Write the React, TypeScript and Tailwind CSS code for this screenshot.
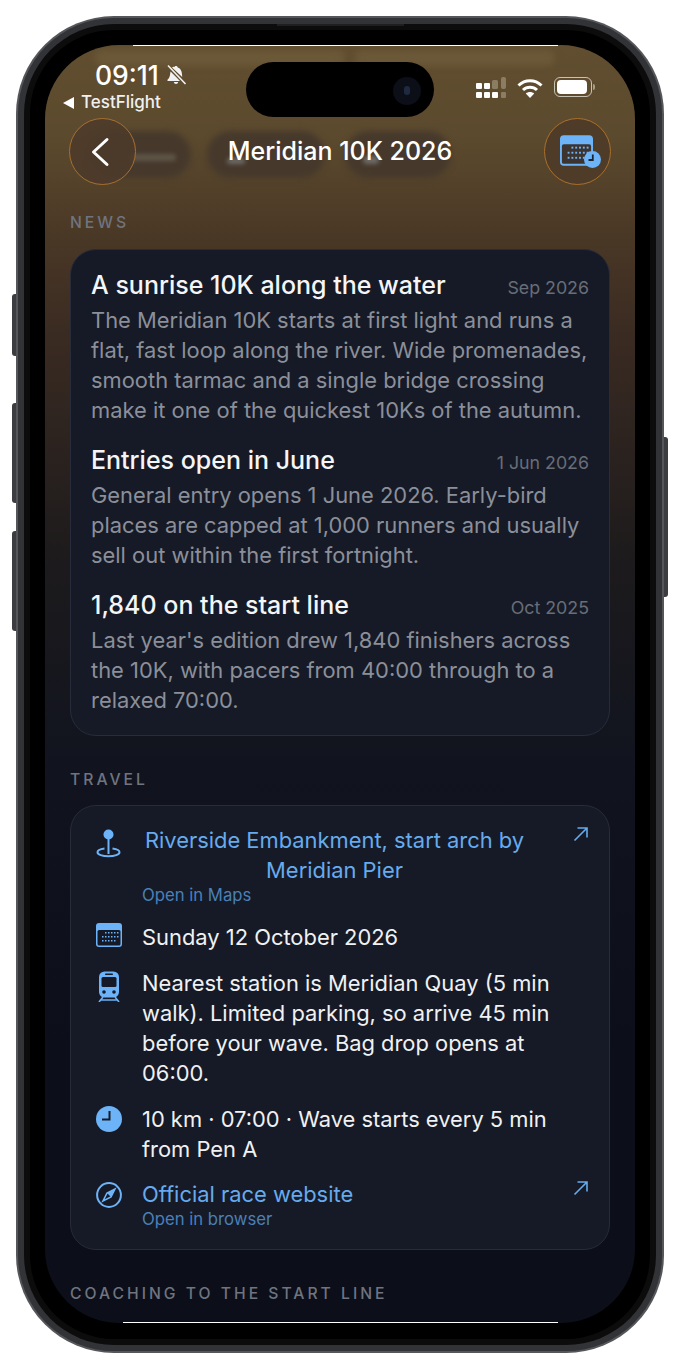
import React from "react";

const inter = { fontFamily: "Inter, 'Noto Sans', sans-serif" };

function Label({ children }: { children: React.ReactNode }) {
  return (
    <div className="pl-[25px] text-[15.7px] leading-[20px] font-medium tracking-[3px] text-[#6f7480]">{children}</div>
  );
}

function NewsItem({ title, date, body }: { title: string; date: string; body: string[] }) {
  return (
    <div>
      <div className="flex items-baseline justify-between">
        <div className="text-[25px] leading-[40px] font-medium text-[#f4f5f7]">{title}</div>
        <div className="text-[17.8px] text-[#686d78]">{date}</div>
      </div>
      <div className="text-[21.9px] leading-[30px] text-[#8b8f9a]">
        {body.map((l) => (
          <div key={l} className="whitespace-nowrap">{l}</div>
        ))}
      </div>
    </div>
  );
}

const Arrow = () => (
  <svg width="16" height="16" viewBox="0 0 16 16" fill="none" stroke="#66abee" strokeWidth="1.6" className="shrink-0">
    <path d="M1.5 14.5 14 2M4.5 2H14V11.5" />
  </svg>
);

const CalendarIcon = ({ w, h, inner }: { w: number; h: number; inner: string }) => (
  <svg width={w} height={h} viewBox="0 0 26 24" className="shrink-0">
    <rect x="0" y="0" width="26" height="24" rx="3" fill="#6db3f8" />
    <rect x="1.5" y="7" width="23" height="15.500" rx="1.500" fill={inner} />
    <g fill="#6db3f8">
      {[0, 1, 2, 3, 4].map((i) => <rect key={"a" + i} x={9 + i * 3} y="9" width="1.500" height="1.500" />)}
      {[0, 1, 2, 3, 4, 5].map((i) => <rect key={"b" + i} x={6 + i * 3} y="13" width="1.500" height="1.500" />)}
      {[0, 1, 2, 3, 4].map((i) => <rect key={"c" + i} x={6 + i * 3} y="17" width="1.500" height="1.500" />)}
    </g>
  </svg>
);

export default function App() {
  return (
    <div className="relative w-[680px] h-[1369px] bg-white overflow-hidden" style={inter}>
      {/* side buttons */}
      <div className="absolute left-[12px] top-[294px] w-[6px] h-[62px] rounded-l-[3px] bg-[#3c3d40]" />
      <div className="absolute left-[12px] top-[403px] w-[6px] h-[100px] rounded-l-[3px] bg-[#3c3d40]" />
      <div className="absolute left-[12px] top-[531px] w-[6px] h-[100px] rounded-l-[3px] bg-[#3c3d40]" />
      <div className="absolute left-[662px] top-[437px] w-[6px] h-[160px] rounded-r-[3px] bg-[#3c3d40]" />

      <div className="absolute left-[16px] top-[16px] w-[648px] h-[1337px] rounded-[98px] bg-[#55565a] p-[2px]">
        <div className="w-full h-full rounded-[96px] bg-[#323336] p-[6px]">
          <div className="w-full h-full rounded-[90px] bg-[#0c0c0d] p-[6px]">
            <div className="w-full h-full rounded-[84px] bg-black pt-[15px] pl-[15px]">
              <div className="relative w-[590px] h-[1278px]">
                {/* screen */}
                <div className="relative w-full h-full rounded-[74px] overflow-hidden border-y border-transparent bg-origin-border bg-[linear-gradient(180deg,#614e30_0px,#5c4a2e_90px,#4a3826_190px,#3a2b22_290px,#1c1a1c_520px,#11141f_720px,#0c0f19_1000px,#0c0f19_100%)]">
                  {/* blurred content behind the status bar and header */}
                  <div className="absolute left-[50px] top-[4px] w-[250px] h-[16px] rounded-full bg-[#6b5838] blur-[3px]" />
                  <div className="absolute left-[310px] top-[4px] w-[200px] h-[16px] rounded-full bg-[#6b5838] blur-[3px]" />
                  <div className="absolute left-[42px] top-[85px] w-[104px] h-[47px] rounded-full bg-[#46392c] blur-[3px]" />
                  <div className="absolute left-[85px] top-[108px] w-[46px] h-[7px] rounded-full bg-[#5e5547] blur-[2px]" />
                  <div className="absolute left-[162px] top-[85px] w-[118px] h-[47px] rounded-full bg-[#46392c] blur-[3px]" />
                  <div className="absolute left-[182px] top-[112px] w-[18px] h-[6px] rounded-full bg-[#6e6a66] blur-[2px]" />
                  <div className="absolute left-[300px] top-[85px] w-[106px] h-[47px] rounded-full bg-[#46392c] blur-[3px]" />
                  <div className="absolute left-[318px] top-[110px] w-[16px] h-[8px] rounded-full bg-[#6e6a66] blur-[2px]" />

                  {/* island */}
                  <div className="absolute left-[201px] top-[16px] w-[188px] h-[55px] rounded-full bg-black">
                    <div className="absolute right-[13px] top-[15px] w-[28px] h-[28px] rounded-full bg-[#0c0e18]">
                      <div className="absolute left-[11px] top-[9px] w-[6px] h-[9px] rounded-full bg-[#1f2a40]" />
                    </div>
                  </div>

                  {/* status bar */}
                  <div className="relative flex h-[60px] justify-between pl-[50px] pr-[40px] pt-[14px]">
                    <div>
                      <div className="flex items-center gap-[7px] h-[30px]">
                        <span className="text-[26.500px] font-medium leading-[30px] text-white">09:11</span>
                        <svg width="21" height="22" viewBox="0 0 21 22" fill="#f2f2f2">
                          <path d="M10 2c1 0 1.600.6 1.700 1.400 2.600.7 4 3 4.200 6l.3 3.500L6 3.500C7 2.800 8 2.400 8.400 3.300 8.500 2.600 9 2 10 2ZM4.600 7.400 14 17H1.500v-1.200C3.400 14 4 12 4.200 9.500c0-.8.200-1.500.4-2.100ZM7.800 18h4.400c-.2 1.200-1.100 2-2.200 2s-2-.8-2.200-2Z" />
                          <path d="M2 1.500 19.500 20" stroke="#f2f2f2" strokeWidth="1.600" />
                        </svg>
                      </div>
                      <div className="flex items-center gap-[7px] h-[22px] -ml-[32px] mt-[2px] text-[17px] font-medium text-[#f0f0f0]">
                        <span className="w-0 h-0 border-y-[6px] border-y-transparent border-r-[11px] border-r-white" />
                        <span>TestFlight</span>
                      </div>
                    </div>
                    <div className="flex items-start gap-[11px] pt-[18px]">
                      <svg width="30" height="21" viewBox="0 0 30 21" className="-mt-[1px]">
                        <g fill="#fff">
                          <rect x="0" y="6" width="6" height="6" rx="1" /><rect x="0" y="15" width="6" height="6" rx="1" />
                          <rect x="8" y="6" width="6" height="6" rx="1" /><rect x="8" y="15" width="6" height="6" rx="1" />
                          <rect x="16" y="15" width="6" height="6" rx="1" />
                        </g>
                        <g fill="#8b7c62">
                          <rect x="16" y="3" width="6" height="9" rx="1.500" />
                          <rect x="25" y="0" width="5" height="12" rx="2" /><rect x="25" y="15" width="5" height="6" rx="1" />
                        </g>
                      </svg>
                      <svg width="26" height="20" viewBox="0 0 26 20" fill="none" stroke="#fff" strokeWidth="3">
                        <path d="M1.500 7.500C8 1 18 1 24.500 7.500M6 12c4-3.800 10-3.800 14 0" />
                        <path d="M13 20 8.800 15.500c2.400-2 6-2 8.400 0Z" fill="#fff" stroke="none" />
                      </svg>
                      <div className="flex items-center -mt-[1px]">
                        <div className="w-[38px] h-[20px] rounded-[6px] border border-[#c8c2b4] p-[2px]">
                          <div className="w-[30px] h-[14px] rounded-[4px] bg-white" />
                        </div>
                        <div className="ml-[1px] w-[2px] h-[6px] rounded-r-[2px] bg-[#a89e88]" />
                      </div>
                    </div>
                  </div>

                  {/* header */}
                  <div className="relative flex items-center justify-between h-[67px] mt-[12px] px-[24px]">
                    <div className="flex w-[67px] h-[67px] items-center justify-center rounded-full border border-[#a8702e] bg-[#4c3a2a]/85">
                      <svg width="20" height="30" viewBox="0 0 20 30" fill="none" stroke="#fff" strokeWidth="3" strokeLinecap="round" strokeLinejoin="round" className="-ml-[5px]">
                        <path d="M17 2.500 3.500 15 17 27.500" />
                      </svg>
                    </div>
                    <div className="text-[25px] font-medium text-white">Meridian 10K 2026</div>
                    <div className="relative flex w-[67px] h-[67px] items-center justify-center rounded-full border border-[#a8702e] bg-[#4e3c29]">
                      <div className="-mt-[3px] -ml-[2px]"><CalendarIcon w={33} h={31} inner="#3d3430" /></div>
                      <svg width="17" height="17" viewBox="0 0 17 17" className="absolute left-[39px] top-[32px]">
                        <circle cx="8.500" cy="8.500" r="8.500" fill="#6db3f8" />
                        <path d="M8.800 3.500V9H4.500" fill="none" stroke="#1d2430" strokeWidth="1.800" />
                      </svg>
                    </div>
                  </div>

                  {/* News */}
                  <div className="relative mt-[28px]"><Label>NEWS</Label></div>
                  <div className="relative mx-[25px] mt-[16px] h-[487px] rounded-[26px] border border-[#282c3a] bg-[#161a26] px-[20px] pt-[15px]">
                    <div className="flex flex-col gap-[15px]">
                      <NewsItem
                        title="A sunrise 10K along the water"
                        date="Sep 2026"
                        body={[
                          "The Meridian 10K starts at first light and runs a",
                          "flat, fast loop along the river. Wide promenades,",
                          "smooth tarmac and a single bridge crossing",
                          "make it one of the quickest 10Ks of the autumn.",
                        ]}
                      />
                      <NewsItem
                        title="Entries open in June"
                        date="1 Jun 2026"
                        body={[
                          "General entry opens 1 June 2026. Early-bird",
                          "places are capped at 1,000 runners and usually",
                          "sell out within the first fortnight.",
                        ]}
                      />
                      <NewsItem
                        title="1,840 on the start line"
                        date="Oct 2025"
                        body={[
                          "Last year's edition drew 1,840 finishers across",
                          "the 10K, with pacers from 40:00 through to a",
                          "relaxed 70:00.",
                        ]}
                      />
                    </div>
                  </div>

                  {/* Travel */}
                  <div className="relative mt-[34px]"><Label>TRAVEL</Label></div>
                  <div className="relative mx-[25px] mt-[15px] h-[445px] rounded-[26px] border border-[#282c3a] bg-[#161a26] pl-[25px] pr-[20px] pt-[19px] text-[21.9px] leading-[30px] text-[#f0f1f3]">
                    <div className="flex flex-col">
                      {/* maps */}
                      <div className="flex">
                        <div className="w-[46px] shrink-0 pt-[4px]">
                          <svg width="26" height="29" viewBox="0 0 26 29" fill="none" stroke="#6db3f8" strokeWidth="2">
                            <circle cx="12.500" cy="5.500" r="5" fill="#6db3f8" stroke="none" />
                            <path d="M12.500 9v16" />
                            <path d="M8.500 19.500c-4.200.5-7 1.900-7 3.700 0 2.300 4.900 4.100 11 4.100s11-1.800 11-4.100c0-1.800-2.800-3.200-7-3.700" />
                          </svg>
                        </div>
                        <div className="flex-1 min-w-0">
                          <div className="flex items-start">
                            <div className="w-[385px] shrink-0 text-center text-[#66abee] whitespace-nowrap">
                              <div>Riverside Embankment, start arch by</div>
                              <div>Meridian Pier</div>
                            </div>
                            <div className="ml-auto pt-[1px]"><Arrow /></div>
                          </div>
                          <div className="text-[16.700px] leading-[20px] text-[#4a80b8]">Open in Maps</div>
                        </div>
                      </div>
                      {/* date */}
                      <div className="flex mt-[17px]">
                        <div className="w-[46px] shrink-0 pt-[1px]"><CalendarIcon w={26} h={24} inner="#161a26" /></div>
                        <div>Sunday 12 October 2026</div>
                      </div>
                      {/* train */}
                      <div className="flex mt-[16px]">
                        <div className="w-[46px] shrink-0 pt-[3px]">
                          <svg width="26" height="31" viewBox="0 0 26 31">
                            <rect x="3" y="0.500" width="20" height="26" rx="5.500" fill="#6db3f8" />
                            <rect x="5.500" y="6" width="15" height="10" rx="1.500" fill="#161a26" />
                            <rect x="9" y="2.500" width="8" height="1.500" rx="0.700" fill="#161a26" />
                            <circle cx="8" cy="21" r="1.800" fill="#161a26" /><circle cx="18" cy="21" r="1.800" fill="#161a26" />
                            <path d="M7 26 3 31M19 26l4 5M5 29h16" stroke="#6db3f8" strokeWidth="1.600" fill="none" />
                          </svg>
                        </div>
                        <div>
                          <div className="whitespace-nowrap">Nearest station is Meridian Quay (5 min</div>
                          <div className="whitespace-nowrap">walk). Limited parking, so arrive 45 min</div>
                          <div className="whitespace-nowrap">before your wave. Bag drop opens at</div>
                          <div>06:00.</div>
                        </div>
                      </div>
                      {/* clock */}
                      <div className="flex mt-[16px]">
                        <div className="w-[46px] shrink-0 pt-[2px]">
                          <svg width="26" height="26" viewBox="0 0 26 26">
                            <circle cx="13" cy="13" r="13" fill="#6db3f8" />
                            <path d="M13.500 5v8.500H6" fill="none" stroke="#161a26" strokeWidth="2" />
                          </svg>
                        </div>
                        <div>
                          <div>10 km · 07:00 · Wave starts every 5 min</div>
                          <div>from Pen A</div>
                        </div>
                      </div>
                      {/* website */}
                      <div className="flex mt-[15px]">
                        <div className="w-[46px] shrink-0 pt-[3px]">
                          <svg width="26" height="26" viewBox="0 0 26 26">
                            <circle cx="13" cy="13" r="11.900" fill="none" stroke="#6db3f8" strokeWidth="2" />
                            <path d="M19 7 15 15l-8 4 4-8Z" fill="none" stroke="#6db3f8" strokeWidth="1.600" />
                            <path d="M19 7l-8 4 4 4Z" fill="#6db3f8" />
                          </svg>
                        </div>
                        <div className="flex-1">
                          <div className="flex items-start justify-between">
                            <div className="text-[#66abee]">Official race website</div>
                            <div className="pt-[1px]"><Arrow /></div>
                          </div>
                          <div className="text-[16.700px] leading-[20px] text-[#4a80b8]">Open in browser</div>
                        </div>
                      </div>
                    </div>
                  </div>

                  {/* Coaching */}
                  <div className="relative mt-[34px]"><Label>COACHING TO THE START LINE</Label></div>
                </div>
                {/* the thin bright edges of the screen capture */}
                <div className="absolute left-[88px] top-0 w-[425px] h-px bg-white" />
                <div className="absolute left-[78px] bottom-0 w-[435px] h-px bg-white" />
              </div>
            </div>
          </div>
        </div>
      </div>
      {/* speaker slit in the top of the rim */}
      <div className="absolute left-[277px] top-[24px] w-[127px] h-[2px] bg-[#1f1f21]" />
    </div>
  );
}
